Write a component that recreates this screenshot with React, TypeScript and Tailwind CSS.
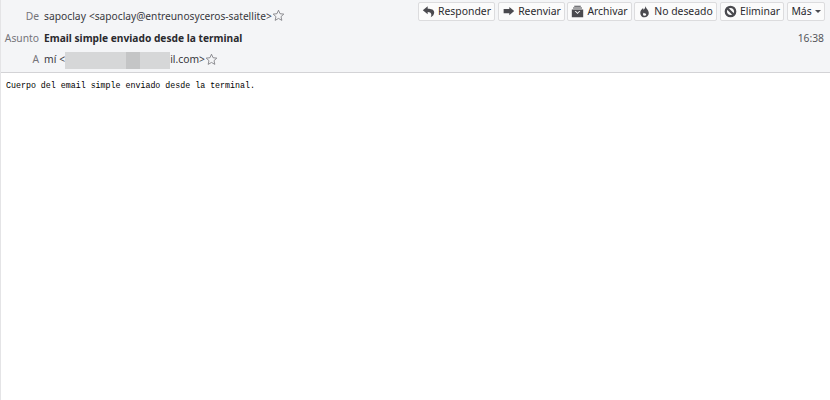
const Reply = () => (
  <svg viewBox="0 0 16 16" className="w-[13px] h-[13px] fill-[#4a4a4f]"><path d="M7 1.500 1 6.500l6 5V8.500c3 0 4.500 1.500 4.500 3.500 0 1.200-.3 2-.8 3 2.800-1.200 4.300-3.200 4.300-6 0-3.500-3.500-4.500-8-4.500V1.500z" /></svg>
);
const Forward = () => (
  <svg viewBox="0 0 16 16" className="w-[13px] h-[13px] fill-[#4a4a4f]"><path d="M9 2.500 15 7.500 9 12.500V10H2V5h7V2.500z" /></svg>
);
const Archive = () => (
  <svg viewBox="0 0 16 16" className="w-[13px] h-[13px] fill-[#4a4a4f]"><path d="M4 1h8v1.200H4zM2.500 3.200h11v1.200h-11zM1 5.400h14V15H1zM4.500 7.500 8 11l3.500-3.500H10L8 9.400 6 7.500z" fillRule="evenodd" /></svg>
);
const Junk = () => (
  <svg viewBox="0 0 16 16" className="w-[13px] h-[13px] fill-[#4a4a4f]"><path d="M9 0.800c.4 2.600-1 3.600-2 5C6.400 5.200 6.300 4.500 6.300 3.700 4 5.500 2.800 7.500 2.800 9.700c0 3.200 2.300 5.500 5.300 5.500s5.200-2.300 5.200-5.300c0-4-3.800-5.800-4.300-9.100zM8.100 13.300a2 2 0 0 1-2-2c0-.8.500-1.300 1-1.800.8.800 3 .8 3 1.800a2 2 0 0 1-2 2z" fillRule="evenodd" /></svg>
);
const Ban = () => (
  <svg viewBox="0 0 16 16" className="w-[13px] h-[13px]"><circle cx="8" cy="8" r="5.800" fill="none" stroke="#4a4a4f" strokeWidth="2.800" /><path d="M4 4l8 8" stroke="#4a4a4f" strokeWidth="2.800" /></svg>
);
const Star = ({ up = false }: { up?: boolean }) => (
  <svg viewBox="0 0 16 16" className={`w-[13px] h-[13px] shrink-0 fill-none stroke-[#77777c] ${up ? "mb-[3px]" : "mb-[1px]"}`}><path d="M8 1.500l1.900 4.300 4.600.5-3.400 3.100 1 4.600L8 11.600l-4.100 2.400 1-4.600L1.500 6.300l4.600-.5z" /></svg>
);

const Btn = ({ w, icon, label, gap = "gap-[3px]" }: { w: string; icon?: React.ReactNode; label: React.ReactNode; gap?: string }) => (
  <div className={`${w} ${gap} h-[19px] shrink-0 flex items-center justify-center whitespace-nowrap bg-[#fbfbfb] border border-[#dcdcde] rounded-[2px] text-[#2a2a2e] text-[10.400px]`}>
    {icon}
    <span>{label}</span>
  </div>
);

const Label = ({ children }: { children: React.ReactNode }) => (
  <div className="w-[39px] text-right text-[#74747a] shrink-0">{children}</div>
);

export default function App() {
  return (
    <div className="w-[830px] h-[400px] bg-white flex flex-col border-l border-[#e4e4e6] overflow-hidden [font-family:'Noto_Sans','Open_Sans',sans-serif]">
      <div className="h-[73px] shrink-0 bg-[#f4f5f7] border-b border-[#d3d3d6] flex flex-col text-[10.300px] text-[#38383d] -ml-px">
        <div className="h-[27px] flex items-start">
          <div className="flex items-center h-[27px] pt-[7px]">
            <Label>De</Label>
            <div className="ml-[5px] flex items-center whitespace-nowrap">
              <span>sapoclay</span>
              <span className="ml-[3px] text-[10.200px]">&lt;sapoclay@entreunosyceros-satellite&gt;</span>
              <Star up />
            </div>
          </div>
          <div className="ml-auto pt-[2px] pr-[5px] flex">
            <Btn w="w-[77px]" icon={<Reply />} label="Responder" />
            <div className="ml-[3px]"><Btn w="w-[67px]" icon={<Forward />} label="Reenviar" /></div>
            <div className="ml-[2px]"><Btn w="w-[65px]" icon={<Archive />} label="Archivar" /></div>
            <div className="ml-[2px]"><Btn w="w-[83px]" icon={<Junk />} label="No deseado" /></div>
            <div className="ml-[3px]"><Btn w="w-[64px]" icon={<Ban />} label="Eliminar" /></div>
            <div className="ml-[3px]"><Btn w="w-[38px]" label={<span className="inline-flex items-center gap-[3px]">Más<span className="border-x-[3px] border-x-transparent border-t-[3px] border-t-[#4a4a4f]" /></span>} /></div>
          </div>
        </div>
        <div className="h-[22px] flex items-center pt-[2px]">
          <Label>Asunto</Label>
          <div className="ml-[5px] font-bold text-[#2a2a2e] text-[10.200px]">Email simple enviado desde la terminal</div>
          <div className="ml-auto pr-[6px] text-[#55555a]">16:38</div>
        </div>
        <div className="h-[22px] flex items-center">
          <Label>A</Label>
          <div className="ml-[5px] flex items-center whitespace-nowrap">
            <span>mí</span>
            <span className="ml-[3px]">&lt;</span>
            <div className="w-[105px] h-[17px] bg-[#d6d7d8] flex justify-end pr-[30px]"><div className="w-[14px] bg-[#c4c5c6]" /></div>
            <span>il.com&gt;</span>
            <Star />
          </div>
        </div>
      </div>
      <div className="pl-[5px] pt-[7px] text-[8.300px] leading-[12px] text-black [font-family:'Liberation_Mono',monospace]">
        Cuerpo del email simple enviado desde la terminal.
      </div>
    </div>
  );
}
